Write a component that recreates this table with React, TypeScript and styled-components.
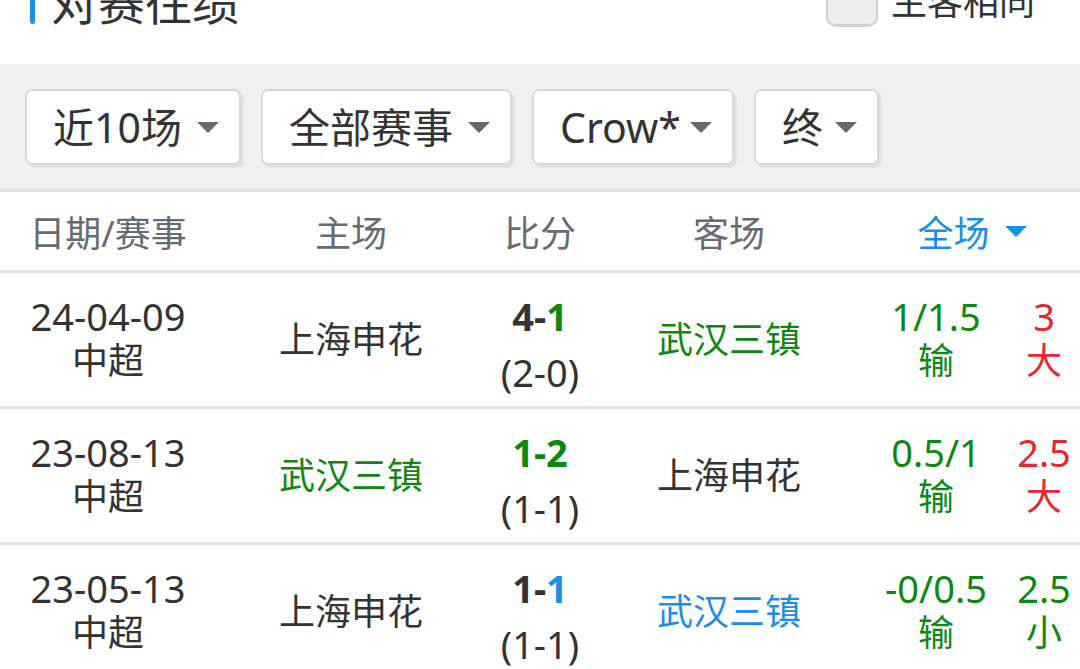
import styled, { createGlobalStyle } from "styled-components";

const GlobalStyle = createGlobalStyle`
	html, body {
		margin: 0;
		padding: 0;
		background: #ffffff;
	}
	body {
		font-family: "Noto Sans", "Noto Sans CJK SC", sans-serif;
		color: #333333;
		width: 1080px;
		height: 669px;
		overflow: hidden;
	}
`;

const GREEN = "#0c880f";
const RED = "#e8262d";
const BLUE = "#1a8fe6";
const DARK = "#333333";

type Tone = "dark" | "green" | "red" | "blue";

const toneColor = (t: Tone = "dark") =>
	t === "green" ? GREEN : t === "red" ? RED : t === "blue" ? BLUE : DARK;

const TitleBar = styled.div`
	height: 64px;
	overflow: hidden;
`;

const TitleRow = styled.div`
	margin-top: -24px;
	height: 52px;
	display: flex;
	align-items: center;
	padding: 0 45px 0 30px;
`;

const Marker = styled.span`
	width: 5px;
	height: 44px;
	border-radius: 3px;
	background: ${BLUE};
	margin-right: 16px;
`;

const Title = styled.h1`
	margin: 0;
	font-size: 47px;
	font-weight: 400;
	line-height: 52px;
	color: ${DARK};
	flex: 1;
`;

const Toggle = styled.label`
	display: flex;
	align-items: center;
	gap: 13px;
	font-size: 36px;
	line-height: 52px;
	color: ${DARK};
`;

const CheckBox = styled.span`
	width: 52px;
	height: 50px;
	box-sizing: border-box;
	border: 2px solid #d2d2d2;
	border-bottom-width: 3px;
	border-radius: 10px;
	background: #eeeeee;
`;

const FilterBand = styled.div`
	display: flex;
	gap: 20px;
	padding: 25px 25px 24px;
	background: #f0f0f0;
	border-bottom: 3px solid #e2e2e2;
`;

const Select = styled.div<{ $w: number }>`
	width: ${(p) => p.$w}px;
	height: 76px;
	box-sizing: border-box;
	display: flex;
	align-items: center;
	justify-content: space-between;
	padding: 0 20px 0 26px;
	background: #ffffff;
	border: 2px solid #d9d9d9;
	border-radius: 7px;
	box-shadow: 3px 3px 1px rgba(0, 0, 0, 0.06);
	font-size: 41px;
	line-height: 50px;
	color: ${DARK};
`;

const Caret = styled.span<{ $color?: string }>`
	width: 0;
	height: 0;
	border-left: 11px solid transparent;
	border-right: 11px solid transparent;
	border-top: 11px solid ${(p) => p.$color || "#666a70"};
`;

const Grid = styled.div`
	display: grid;
	grid-template-columns: 216px 270px 108px 270px 144px 72px;
`;

const HeadRow = styled(Grid)`
	height: 78px;
	border-bottom: 3px solid #e4e4e4;
	align-items: center;
	font-size: 36px;
	color: #676a70;
`;

const HeadCell = styled.div<{ $span?: number; $active?: boolean }>`
	grid-column: span ${(p) => p.$span || 1};
	text-align: center;
	display: flex;
	justify-content: center;
	align-items: center;
	gap: 15px;
	color: ${(p) => (p.$active ? BLUE : "inherit")};
`;

const Row = styled(Grid)`
	height: 133px;
	border-bottom: 3px solid #e4e4e4;
	align-items: center;
`;

const Cell = styled.div<{ $tone?: Tone }>`
	display: flex;
	flex-direction: column;
	align-items: center;
	white-space: nowrap;
	color: ${(p) => toneColor(p.$tone)};
`;

const Line = styled.div`
	font-size: 36px;
	line-height: 42px;
`;

/* numbers sit a little higher than the CJK line below them */
const NumLine = styled.div`
	font-size: 38px;
	line-height: 36px;
	padding-bottom: 6px;
`;

const ScoreCell = styled(Cell)`
	padding-top: 12px;
`;

const Score = styled(NumLine)`
	font-weight: 700;
`;

const Goal = styled.span<{ $tone?: Tone }>`
	color: ${(p) => toneColor(p.$tone)};
`;

const Half = styled.div`
	font-size: 38px;
	line-height: 42px;
	margin-top: 11px;
`;

type Match = {
	date: string;
	league: string;
	home: string;
	homeTone: Tone;
	away: string;
	awayTone: Tone;
	hg: string;
	ag: string;
	hgTone: Tone;
	agTone: Tone;
	half: string;
	hcap: string;
	hcapRes: string;
	hcapTone: Tone;
	ou: string;
	ouRes: string;
	ouTone: Tone;
};

const matches: Match[] = [
	{
		date: "24-04-09", league: "中超",
		home: "上海申花", homeTone: "dark", away: "武汉三镇", awayTone: "green",
		hg: "4", ag: "1", hgTone: "dark", agTone: "green", half: "(2-0)",
		hcap: "1/1.5", hcapRes: "输", hcapTone: "green",
		ou: "3", ouRes: "大", ouTone: "red",
	},
	{
		date: "23-08-13", league: "中超",
		home: "武汉三镇", homeTone: "green", away: "上海申花", awayTone: "dark",
		hg: "1", ag: "2", hgTone: "green", agTone: "green", half: "(1-1)",
		hcap: "0.5/1", hcapRes: "输", hcapTone: "green",
		ou: "2.5", ouRes: "大", ouTone: "red",
	},
	{
		date: "23-05-13", league: "中超",
		home: "上海申花", homeTone: "dark", away: "武汉三镇", awayTone: "blue",
		hg: "1", ag: "1", hgTone: "dark", agTone: "blue", half: "(1-1)",
		hcap: "-0/0.5", hcapRes: "输", hcapTone: "green",
		ou: "2.5", ouRes: "小", ouTone: "green",
	},
];

const filters = [
	{ label: "近10场", w: 216 },
	{ label: "全部赛事", w: 251 },
	{ label: "Crow*", w: 202 },
	{ label: "终", w: 125 },
];

export default function App() {
	return (
		<>
			<GlobalStyle />
			<TitleBar>
				<TitleRow>
					<Marker />
					<Title>对赛往绩</Title>
					<Toggle>
						<CheckBox />
						主客相同
					</Toggle>
				</TitleRow>
			</TitleBar>
			<FilterBand>
				{filters.map((f) => (
					<Select key={f.label} $w={f.w}>
						<span>{f.label}</span>
						<Caret />
					</Select>
				))}
			</FilterBand>
			<HeadRow>
				<HeadCell>日期/赛事</HeadCell>
				<HeadCell>主场</HeadCell>
				<HeadCell>比分</HeadCell>
				<HeadCell>客场</HeadCell>
				<HeadCell $span={2} $active>
					全场
					<Caret $color={BLUE} />
				</HeadCell>
			</HeadRow>
			{matches.map((m) => (
				<Row key={m.date}>
					<Cell>
						<NumLine>{m.date}</NumLine>
						<Line>{m.league}</Line>
					</Cell>
					<Cell $tone={m.homeTone}>
						<Line>{m.home}</Line>
					</Cell>
					<ScoreCell>
						<Score>
							<Goal $tone={m.hgTone}>{m.hg}</Goal>
							<Goal $tone={m.hgTone === "green" && m.agTone === "green" ? "green" : "dark"}>-</Goal>
							<Goal $tone={m.agTone}>{m.ag}</Goal>
						</Score>
						<Half>{m.half}</Half>
					</ScoreCell>
					<Cell $tone={m.awayTone}>
						<Line>{m.away}</Line>
					</Cell>
					<Cell $tone={m.hcapTone}>
						<NumLine>{m.hcap}</NumLine>
						<Line>{m.hcapRes}</Line>
					</Cell>
					<Cell $tone={m.ouTone}>
						<NumLine>{m.ou}</NumLine>
						<Line>{m.ouRes}</Line>
					</Cell>
				</Row>
			))}
		</>
	);
}
